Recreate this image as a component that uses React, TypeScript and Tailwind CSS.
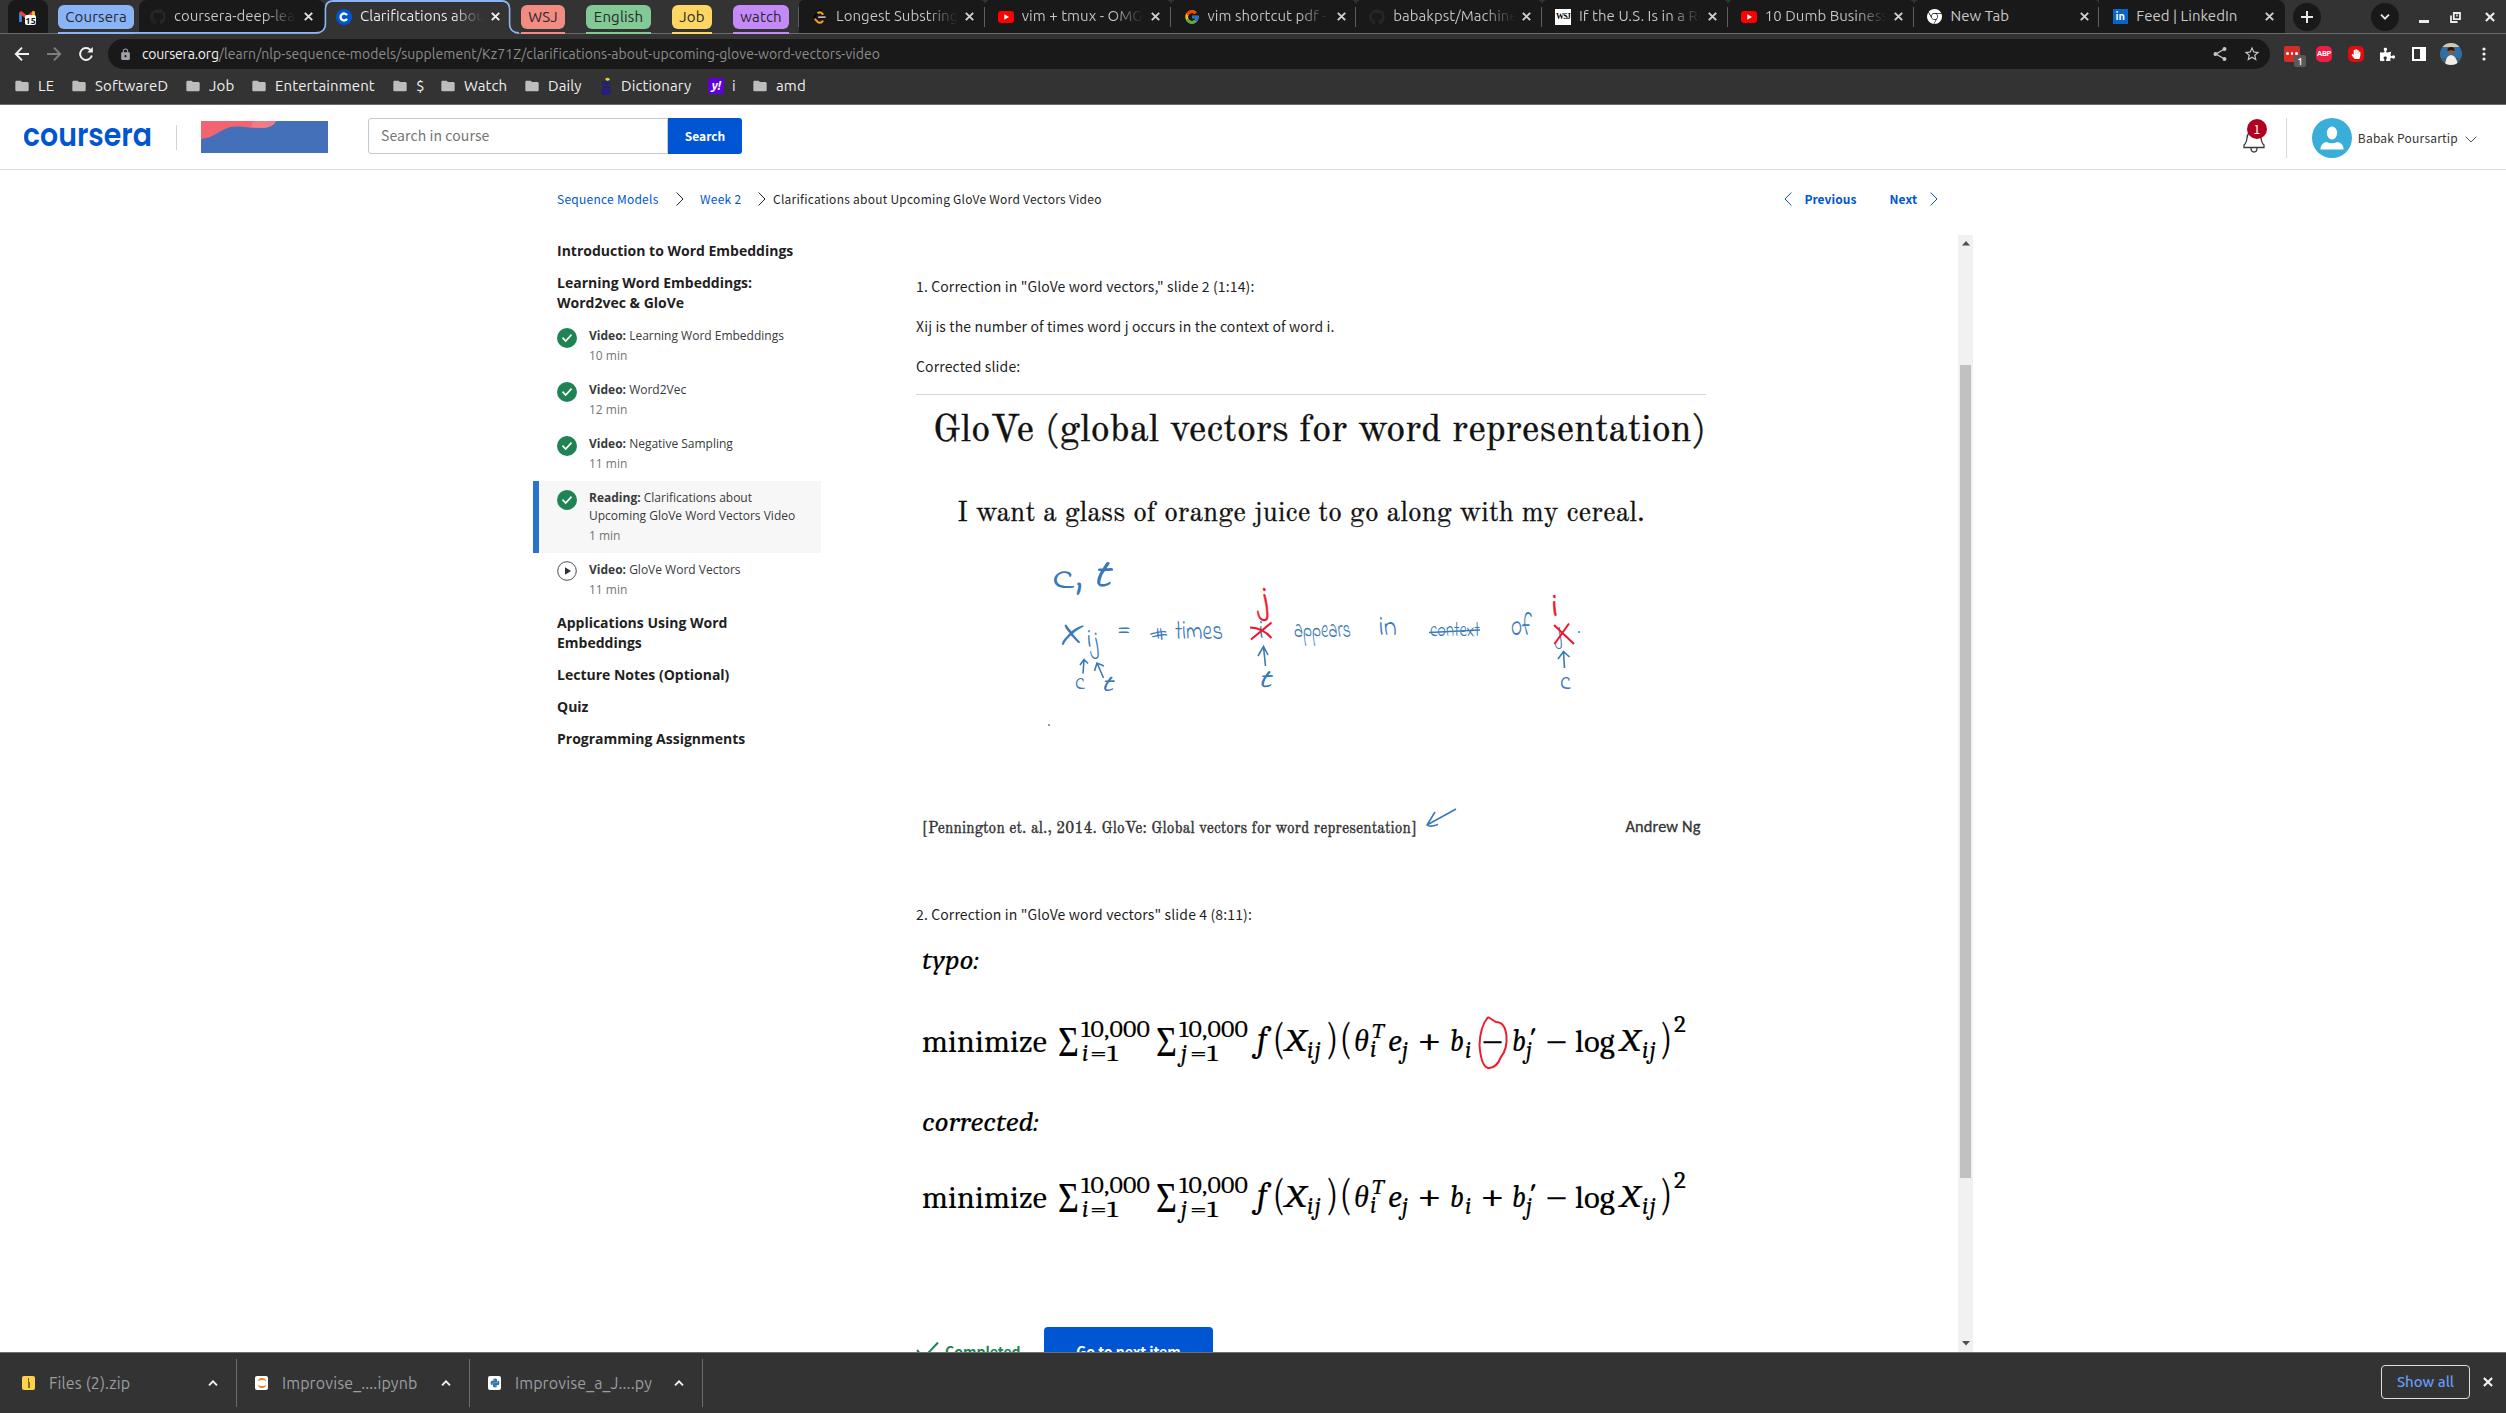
import type { ReactNode } from 'react';
import { FcGoogle } from 'react-icons/fc';
import { FaGithub, FaPuzzlePiece, FaPython, FaHandPaper } from 'react-icons/fa';
import { SiGooglechrome } from 'react-icons/si';
import { MdStarBorder, MdLock, MdFolder } from 'react-icons/md';

/* ---------- browser chrome ---------- */

function CloseX({ className = 'size-[9px]' }: { className?: string }) {
  return (
    <svg viewBox="0 0 9 9" className={className} fill="none" stroke="currentColor" strokeWidth="1.9">
      <path d="M0.8 0.8 8.2 8.2M8.2 0.8 0.8 8.2" />
    </svg>
  );
}

function YouTubeIcon() {
  return (
    <svg viewBox="0 0 16 16" className="size-4">
      <rect x="0" y="2" width="16" height="12" rx="3" fill="#f00" />
      <path d="M6.3 5.2 11 8l-4.7 2.8z" fill="#fff" />
    </svg>
  );
}

function LeetCodeIcon() {
  return (
    <svg viewBox="0 0 16 16" className="size-4" fill="none" strokeWidth="2" strokeLinecap="round">
      <path d="M8.500 1.200 3.200 6.600Q1.600 8.400 3.200 10.200" stroke="#050505" />
      <path d="M6.200 3.800 7.700 3.200Q9 3.200 10.600 5M3.200 10.400 5.800 13Q8 14.800 10.600 12.200" stroke="#ffa116" />
      <path d="M6.800 8.200H13" stroke="#b3b3b3" strokeWidth="1.700" />
    </svg>
  );
}

function CourseraMark() {
  return (
    <svg viewBox="0 0 16 16" className="size-4">
      <circle cx="8" cy="8" r="8" fill="#0056d2" />
      <path d="M11 6.1A3.5 3.5 0 1 0 11 9.9" fill="none" stroke="#fff" strokeWidth="2.3" />
    </svg>
  );
}

function GmailIcon() {
  return (
    <svg viewBox="0 0 18 16" className="h-4 w-[18px]">
      <path d="M1.5 13V3.5" stroke="#4285f4" strokeWidth="2.8" />
      <path d="M1 3l7 5.5L15 3" fill="none" stroke="#ea4335" strokeWidth="3.2" />
      <path d="M14.5 2.2V8" stroke="#fbbc04" strokeWidth="2.8" />
      <rect x="6" y="6" width="11" height="10" rx="2" fill="#fff" />
      <text x="11.6" y="14.6" textAnchor="middle" fontSize="9.5" fontWeight="700" fill="#111" fontFamily="Ubuntu, Noto Sans, sans-serif">15</text>
    </svg>
  );
}

function Tab({ icon, title, last, short }: { icon: ReactNode; title: string; last?: boolean; short?: boolean }) {
  return (
    <div className={`flex h-[33px] flex-1 items-center bg-[#191919] pl-[13px] ${last ? 'rounded-tr-lg' : 'rounded-t-[5px]'}`}>
      <span className="flex size-4 shrink-0 items-center justify-center">{icon}</span>
      <span
        className={`ml-2 w-[122px] shrink-0 overflow-hidden text-[15px] tracking-[0.03px] whitespace-nowrap ${
          short ? 'text-[#c9c9c9]' : 'bg-linear-to-r from-[#c9c9c9] from-75% to-[#191919] bg-clip-text text-transparent'
        }`}
      >
        {title}
      </span>
      <span className="ml-[7px] text-[#d0d0d0]"><CloseX /></span>
      {!last && <span className="ml-auto h-5 w-px bg-[#5e5e5e]" />}
    </div>
  );
}

function Chip({ label, chip, bar }: { label: string; chip: string; bar: string }) {
  return (
    <div className={`flex h-[34px] flex-col ${chip}`}>
      <span className={`mt-[5px] flex h-6 items-center justify-center rounded-md text-[15px] tracking-[0.15px] text-[#26282b] ${bar}`}>{label}</span>
      <span className={`mt-[3px] h-[1.5px] ${bar}`} />
    </div>
  );
}

function TabStrip() {
  return (
    <div className="relative flex h-[34px] shrink-0 border-b border-[#6b6b6b] bg-[#333]">
      <div className="ml-2 flex h-[33px] w-10 items-center justify-center rounded-t-lg bg-[#191919]"><GmailIcon /></div>
      <Chip label="Coursera" chip="ml-2.5 w-[76px]" bar="bg-[#8ab4f8]" />
      <div className="ml-[5px] flex h-[33px] w-[186px] items-center rounded-t-lg bg-[#191919] pl-[11px]">
        <FaGithub className="size-4 shrink-0 text-[#22272e]" />
        <span className="ml-2 w-[122px] overflow-hidden bg-linear-to-r from-[#c9c9c9] from-75% to-[#191919] bg-clip-text text-[15px] whitespace-nowrap text-transparent">coursera-deep-lea</span>
        <span className="ml-2 text-[#e0e0e0]"><CloseX /></span>
      </div>
      <div className="z-10 flex h-[33px] w-[185px] items-center pl-[11px]">
        <CourseraMark />
        <span className="ml-2 w-[124px] overflow-hidden bg-linear-to-r from-[#f2f2f2] from-75% to-[#333] bg-clip-text text-[15px] whitespace-nowrap text-transparent">Clarifications abou</span>
        <span className="ml-[7px] text-[#f2f2f2]"><CloseX /></span>
      </div>
      <Chip label="WSJ" chip="ml-[11px] w-11" bar="bg-[#f28b82]" />
      <Chip label="English" chip="ml-[21px] w-[65px]" bar="bg-[#81c995]" />
      <Chip label="Job" chip="ml-[21px] w-10" bar="bg-[#fdd663]" />
      <Chip label="watch" chip="ml-[21px] w-14" bar="bg-[#c58af9]" />
      <span className="mt-[7px] ml-[9px] h-5 w-px bg-[#5e5e5e]" />
      <div className="flex w-[1486px]">
        <Tab icon={<LeetCodeIcon />} title="Longest Substring" />
        <Tab icon={<YouTubeIcon />} title="vim + tmux - OMG!" />
        <Tab icon={<FcGoogle className="size-4" />} title="vim shortcut pdf - G" />
        <Tab icon={<FaGithub className="size-4 text-[#22272e]" />} title="babakpst/Machine" />
        <Tab icon={<span className="flex size-4 items-center justify-center bg-white font-['Liberation_Serif',serif] text-[8px] font-bold tracking-[-0.8px] text-black">WSJ</span>} title="If the U.S. Is in a Re" />
        <Tab icon={<YouTubeIcon />} title="10 Dumb Business" />
        <Tab short icon={<SiGooglechrome className="size-[15px] text-white" />} title="New Tab" />
        <Tab
          last
          short
          icon={<span className="flex size-[15px] items-center justify-center bg-[#0a66c2] text-[11px] font-bold text-white">in</span>}
          title="Feed | LinkedIn"
        />
      </div>
      <span className="mt-[3px] ml-2 flex size-7 items-center justify-center rounded-full bg-[#191919] text-[#e8e8e8]">
        <svg viewBox="0 0 12 12" className="size-3" stroke="currentColor" strokeWidth="2"><path d="M6 0v12M0 6h12" /></svg>
      </span>
      <span className="mt-[3px] ml-[50px] flex size-7 items-center justify-center rounded-full bg-[#191919] text-[#e8e8e8]">
        <svg viewBox="0 0 10 6" className="h-1.5 w-2.5" fill="none" stroke="currentColor" strokeWidth="1.8"><path d="M1 0.7 5 4.7 9 0.7" /></svg>
      </span>
      <span className="mt-5 ml-5 h-[3px] w-2.5 bg-[#ececec]" />
      <svg viewBox="0 0 11 11" className="mt-3 ml-[21px] size-[11px]" fill="none" stroke="#ececec" strokeWidth="1.8"><path d="M3.8 1h6.2v6.2H3.8zM1 3.5V10h6.5M6.2 3.5h1.5" /></svg>
      <span className="mt-3 ml-6 text-[#ececec]"><CloseX className="size-2.5" /></span>
      <svg className="absolute top-0 left-0 h-[34px] w-[530px]" viewBox="0 0 530 34">
        <path d="M58 32.8H316Q325.5 32.8 325.5 24V9Q325.5 1 333.5 1H501Q509.5 1 509.5 9V24Q509.5 32.8 519 32.8" fill="none" stroke="#8ab4f8" strokeWidth="1.8" />
        <path d="M319 34Q326.5 31 326.5 24V9Q326.5 2 333.5 2H501Q508.5 2 508.5 9V24Q508.5 31 516 34z" fill="#333" />
      </svg>
    </div>
  );
}

function Toolbar() {
  return (
    <div className="flex h-[38px] shrink-0 items-center bg-[#333] pt-0.5 pb-0">
      <svg viewBox="0 0 16 16" className="ml-3.5 size-4" fill="none" stroke="#f1f1f1" strokeWidth="1.9"><path d="M15 8H2M8 1.7 1.8 8 8 14.3" /></svg>
      <svg viewBox="0 0 16 16" className="ml-4 size-4" fill="none" stroke="#7f7f7f" strokeWidth="1.9"><path d="M1 8h13M8 1.7 14.2 8 8 14.3" /></svg>
      <svg viewBox="0 0 16 16" className="ml-4 size-4" fill="none" stroke="#f1f1f1" strokeWidth="1.9"><path d="M13.9 9.6A6 6 0 1 1 12.4 3.8L14 5.4" /><path d="M14.8 1v5.6H9.2z" fill="#f1f1f1" stroke="none" /></svg>
      <div className="ml-3.5 flex h-[30px] w-[2162px] items-center rounded-full bg-[#191919] pr-[9px]">
        <MdLock className="ml-[11px] size-[13px] text-[#a0a4a8]" />
        <span className="ml-[10px] text-[14px] tracking-[0.05px] text-[#8c8c8c]">
          <span className="tracking-[-0.2px] text-[#f3f3f3]">coursera.org</span>/learn/nlp-sequence-models/supplement/Kz71Z/clarifications-about-upcoming-glove-word-vectors-video
        </span>
        <svg viewBox="0 0 14 14" className="ml-auto size-3.5" fill="none" stroke="#c4c4c4" strokeWidth="1.4"><path d="M11.5 2 3 7l8.500 5" /><circle cx="11.500" cy="2" r="1.300" fill="#c4c4c4" /><circle cx="2.500" cy="7" r="1.300" fill="#c4c4c4" /><circle cx="11.500" cy="12" r="1.300" fill="#c4c4c4" /></svg>
        <MdStarBorder className="ml-4 size-[18px] text-[#c4c4c4]" />
      </div>
      <span className="relative ml-3.5 flex size-4 items-center justify-center rounded-[2px] bg-[#d32d27]">
        <span className="flex gap-0.5 pb-px">
          <i className="size-[2.500px] rounded-full bg-white" /><i className="size-[2.500px] rounded-full bg-white" /><i className="size-[2.500px] rounded-full bg-white" />
        </span>
        <span className="absolute top-[9px] left-[10px] flex h-3 w-3 items-center justify-center rounded-[2px] bg-[#5a5a5a] text-[10px] font-medium text-white">1</span>
      </span>
      <span className="ml-4 flex size-4 items-center justify-center rounded-[5px] bg-[#ed1e45] text-[7.500px] font-bold tracking-[-0.3px] text-white">ABP</span>
      <span className="ml-4 flex size-4 items-center justify-center rounded-[5px] bg-[#e40d0d] text-white"><FaHandPaper className="size-2.5" /></span>
      <FaPuzzlePiece className="ml-4 size-[15px] text-white" />
      <span className="ml-[17px] h-3.5 w-3.5 border-2 border-r-[6px] border-white" />
      <svg viewBox="0 0 22 22" className="ml-[14px] size-[22px]">
        <clipPath id="me"><circle cx="11" cy="11" r="11" /></clipPath>
        <g clipPath="url(#me)">
          <rect width="22" height="22" fill="#2f6fa6" />
          <rect width="22" height="4" fill="#d9c7a5" />
          <rect y="15" width="22" height="7" fill="#3f5d6b" />
          <path d="M5 22q1-10 6-10t7 10z" fill="#f1ede9" />
          <circle cx="11" cy="8.500" r="3.200" fill="#8b5a3e" />
          <path d="M7.500 8q-.5-4 3.500-4t3.500 4q-3.500-1.500-7 0z" fill="#231a16" />
        </g>
      </svg>
      <svg viewBox="0 0 4 14" className="ml-5 h-3.5 w-1" fill="#f1f1f1"><circle cx="2" cy="2" r="1.600" /><circle cx="2" cy="7" r="1.600" /><circle cx="2" cy="12" r="1.600" /></svg>
    </div>
  );
}

function Folder({ label, w }: { label: string; w: string }) {
  return (
    <span className={`flex shrink-0 items-center ${w}`}>
      <MdFolder className="-ml-px size-4 text-[#bdbdbd]" />
      <span className="ml-2 whitespace-nowrap">{label}</span>
    </span>
  );
}

function Bookmarks() {
  return (
    <div className="flex h-[33px] shrink-0 items-center border-b border-[#6b6b6b] bg-[#333] pb-1 pl-[15px] text-[15px] tracking-[0.12px] text-[#f0f0f0]">
      <Folder label="LE" w="w-[57px]" />
      <Folder label="SoftwareD" w="w-[114px]" />
      <Folder label="Job" w="w-[66px]" />
      <Folder label="Entertainment" w="w-[141px]" />
      <Folder label="$" w="w-[48px]" />
      <Folder label="Watch" w="w-[84px]" />
      <Folder label="Daily" w="w-[74px]" />
      <span className="flex w-[109px] items-center">
        <svg viewBox="0 0 14 18" className="h-[18px] w-3.5"><path d="M6 2q4-3 5 1l-3 1z" fill="#e8d21d" /><path d="M3 5l4-1 4 1v5l1 2-1 6H3L2 12l1-2z" fill="#231f7c" /><path d="M3 8h8M2 12h10" stroke="#333" strokeWidth="0.8" /></svg>
        <span className="ml-2">Dictionary</span>
      </span>
      <span className="flex w-[45px] items-center">
        <span className="flex size-4 items-center justify-center bg-[#5f01d1] text-[12px] font-bold tracking-[-0.5px] text-white italic">y!</span>
        <span className="ml-2">i</span>
      </span>
      <Folder label="amd" w="w-[80px]" />
    </div>
  );
}

function Download({ icon, name }: { icon: ReactNode; name: string }) {
  return (
    <div className="flex h-12 w-[233px] shrink-0 items-center border-r border-[#6d6d6d] pr-[18px] pl-[18px]">
      <span className="flex h-3.5 w-[13px] items-center justify-center">{icon}</span>
      <span className="ml-[14px] text-[16px] tracking-[0.12px] text-[#9a9da1]">{name}</span>
      <svg viewBox="0 0 10 6" className="ml-auto h-1.5 w-2.5" fill="none" stroke="#f0f0f0" strokeWidth="1.900"><path d="M1 5.300 5 1.300 9 5.300" /></svg>
    </div>
  );
}

function DownloadBar() {
  return (
    <div className="flex h-[61px] shrink-0 items-center border-t border-[#6f6f6f] bg-[#333] pl-1">
      <Download icon={<span className="flex h-3.5 w-[13px] flex-col items-center justify-between rounded-[2px] bg-[#fcd34a] py-0.5"><i className="h-1 w-px bg-[#7a5b00]" /><i className="h-1.5 w-0.5 bg-[#8a6a10]" /></span>} name="Files (2).zip" />
      <Download icon={<span className="flex h-3.5 w-[13px] flex-col items-center justify-between rounded-[2px] bg-white py-0.5"><i className="h-1 w-2 rounded-t-full border-t-2 border-[#f37726]" /><i className="h-1 w-2 rounded-b-full border-b-2 border-[#f37726]" /></span>} name="Improvise_....ipynb" />
      <Download icon={<span className="flex h-3.5 w-[13px] items-center justify-center rounded-[2px] bg-white"><FaPython className="size-2.5 text-[#3674a8]" /></span>} name="Improvise_a_J....py" />
      <span className="mb-0.5 ml-auto flex h-[34px] w-[89px] items-center justify-center rounded-[4px] border border-[#dedede] text-[15px] font-medium text-[#649cf5]">Show all</span>
      <span className="mr-[13px] mb-0.5 ml-[13px] text-[#f2f2f2]"><CloseX className="size-2.5" /></span>
    </div>
  );
}

/* ---------- course site ---------- */

function Header() {
  return (
    <header className="flex h-[65px] shrink-0 items-center border-b border-[#dcdcdc] bg-white">
      <svg viewBox="0 0 128 24" className="ml-6 h-6 w-32">
        <text x="-1" y="21" textLength="129" lengthAdjust="spacingAndGlyphs" className="fill-[#0056d2] font-['Poppins','Montserrat','Lato',sans-serif] text-[31px] font-semibold">coursera</text>
      </svg>
      <span className="ml-6 h-[25px] w-px bg-[#d2d2d2]" />
      <svg viewBox="0 0 127 32" className="ml-6 h-8 w-[127px]">
        <rect width="127" height="32" fill="#4370b8" />
        <path d="M0 0H75Q72 7 61 7C48 8 42 4 30 6C18 9 13 17 0 18z" fill="#f26470" />
        <path d="M52 0H75Q72 7 61 7L50 6z" fill="#ee7c88" />
      </svg>
      <div className="mb-[3px] ml-10 flex h-9">
        <span className="flex w-[300px] items-center rounded-l-[3px] border border-[#c7c7d1] pl-3 text-[14px] tracking-[0.1px] text-[#757575]">Search in course</span>
        <span className="flex w-[74px] items-center justify-center rounded-r-[3px] bg-[#0056d2] text-[12px] font-bold text-white">Search</span>
      </div>
      <span className="relative ml-auto flex h-10 w-[22px] items-end">
        <svg viewBox="0 0 22 28" className="mb-1 h-7 w-[22px]" fill="none" stroke="#3a3a3a" strokeWidth="1.300">
          <path d="M1 22.500v-2.500q2.500-2 3-7 .8-7 7-7t7 7q.5 5 3 7v2.500zM8 23q0 4 3 4t3-4" />
        </svg>
        <span className="absolute top-0.5 left-1 flex size-5 items-center justify-center rounded-full bg-[#b00020] text-[12px] text-white">1</span>
      </span>
      <span className="mt-0.5 ml-[21px] h-10 w-px bg-[#d8d8d8]" />
      <svg viewBox="0 0 40 40" className="mt-0.5 ml-[25px] size-10">
        <circle cx="20" cy="20" r="20" fill="#3badd9" />
        <ellipse cx="20" cy="15" rx="5.200" ry="6.500" fill="#fff" />
        <path d="M8.500 31.500q0-6.500 6-7.500 5.500 2.500 11 0 6 1 6 7.500z" fill="#fff" />
      </svg>
      <span className="mt-0.5 ml-[6px] text-[12px] tracking-[0.22px] text-[#333]">Babak Poursartip</span>
      <svg viewBox="0 0 12 7" className="mt-1 mr-[29px] ml-[7px] h-[7px] w-3" fill="none" stroke="#555"><path d="M0.700 0.700 6 6 11.300 0.700" /></svg>
    </header>
  );
}

function Angle({ left }: { left?: boolean }) {
  return (
    <svg viewBox="0 0 8 14" className="h-3.5 w-2" fill="none" stroke="currentColor" strokeWidth="1">
      <path d={left ? 'M7.400 0.500 1 7 7.400 13.500' : 'M0.600 0.500 7 7 0.600 13.500'} />
    </svg>
  );
}

function Breadcrumbs() {
  return (
    <nav className="flex h-[65px] shrink-0 items-center pb-[7px] pl-[557px] text-[12px] tracking-[0.25px] text-[#1f1f1f]">
      <span className="w-[119px] text-[#0056d2]">Sequence Models</span>
      <span className="w-[24px]"><Angle /></span>
      <span className="w-[58px] text-[#0056d2]">Week 2</span>
      <span className="w-[15px]"><Angle /></span>
      <span>Clarifications about Upcoming GloVe Word Vectors Video</span>
      <span className="mr-[568px] ml-auto flex items-center font-bold tracking-[0.06px] text-[#0056d2]">
        <Angle left />
        <span className="ml-3">Previous</span>
        <span className="mr-[13px] ml-[33px]">Next</span>
        <Angle />
      </span>
    </nav>
  );
}

function Item({ kind, title, time, active, pending }: { kind: string; title: string; time: string; active?: boolean; pending?: boolean }) {
  return (
    <div className={`flex w-[288px] items-start border-l-[6px] py-2 pl-[18px] text-[12px] leading-[18px] text-[#373a3c] ${active ? 'border-[#2a73cc] bg-[#f7f7f7]' : 'border-transparent'}`}>
      {pending ? (
        <svg viewBox="0 0 20 20" className="size-5 shrink-0"><circle cx="10" cy="10" r="9.300" fill="#fff" stroke="#4a4a55" /><path d="M8 6.300 14 10l-6 3.700z" fill="#2b2d3a" /></svg>
      ) : (
        <svg viewBox="0 0 20 20" className="mt-px size-5 shrink-0"><circle cx="10" cy="10" r="10" fill="#1f8354" /><path d="M5.500 9.600 8.700 13 14.500 6.600" fill="none" stroke="#fff" strokeWidth="1.600" /></svg>
      )}
      <div className="ml-3 w-[215px]">
        <p><b>{kind}:</b> {title}</p>
        <p className="h-5 leading-[22px] text-[#757575]">{time}</p>
      </div>
    </div>
  );
}

function Heading({ children }: { children: ReactNode }) {
  return <h3 className="ml-6 w-[245px] py-1.5 text-[14px] leading-5 font-bold text-[#1f1f1f]">{children}</h3>;
}

function Sidebar() {
  return (
    <aside className="ml-[533px] w-[383px] shrink-0 font-['Open_Sans','Noto_Sans',sans-serif]">
      <Heading>Introduction to Word Embeddings</Heading>
      <Heading>Learning Word Embeddings: Word2vec &amp; GloVe</Heading>
      <Item kind="Video" title="Learning Word Embeddings" time="10 min" />
      <Item kind="Video" title="Word2Vec" time="12 min" />
      <Item kind="Video" title="Negative Sampling" time="11 min" />
      <Item kind="Reading" title="Clarifications about Upcoming GloVe Word Vectors Video" time="1 min" active />
      <Item kind="Video" title="GloVe Word Vectors" time="11 min" pending />
      <Heading>Applications Using Word Embeddings</Heading>
      <Heading>Lecture Notes (Optional)</Heading>
      <Heading>Quiz</Heading>
      <Heading>Programming Assignments</Heading>
    </aside>
  );
}

/* A label placed on the slide; with a width given, it is stretched to span it. */
function Ink({ x, y, w, className, children }: { x: number; y: number; w?: number; className: string; children: string }) {
  return <text x={x} y={y} textLength={w} lengthAdjust={w ? 'spacingAndGlyphs' : undefined} className={className}>{children}</text>;
}

const SLIDE = "font-['Old_Standard_TT','Latin_Modern_Roman','Liberation_Serif',serif]";
const HAND = "fill-[#3a79b7] font-['Indie_Flower','Caveat','Lato',cursive]";
const LOOP = "font-['Caveat','Indie_Flower','Lato',cursive]";

function Slide() {
  return (
    <svg viewBox="916 394 790 448" className="block h-[448px] w-[790px]">
      <rect x="916" y="394" width="790" height="1" fill="#d6d6d6" />
      <g className={SLIDE}>
        <Ink x={933} y={440.500} w={773} className="fill-[#111] stroke-[#111] stroke-[0.400px] text-[37.500px]">GloVe (global vectors for word representation)</Ink>
        <Ink x={957} y={521} w={688} className="fill-[#111] stroke-[#111] stroke-[0.300px] text-[27.500px]">I want a glass of orange juice to go along with my cereal.</Ink>
        <Ink x={922} y={833} w={495} className="fill-[#333] stroke-[#333] stroke-[0.400px] text-[16px]">[Pennington et. al., 2014. GloVe: Global vectors for word representation]</Ink>
      </g>
      <Ink x={1625.500} y={832} w={75} className="fill-[#333] stroke-[#333] stroke-[0.300px] font-['Carlito','Lato',sans-serif] text-[16.500px]">Andrew Ng</Ink>
      <g className={HAND}>
        <Ink x={1052} y={588} w={31} className="text-[36px]">c,</Ink>
        <g className={LOOP}><Ink x={1091} y={587} w={18} className="text-[44px]">t</Ink></g>
        <Ink x={1060} y={643} w={25} className="text-[35px]">X</Ink>
        <Ink x={1087} y={647} className="text-[26px]">i</Ink>
        <Ink x={1093} y={648} className="text-[26px]">j</Ink>
        <Ink x={1117} y={638} w={14} className="text-[26px]">=</Ink>
        <Ink x={1150} y={640} w={18} className="text-[24px]">#</Ink>
        <Ink x={1175} y={639} w={48} className="text-[29px]">times</Ink>
        <Ink x={1259} y={638} className="text-[26px]">i</Ink>
        <Ink x={1294} y={637} w={57} className="text-[26px]">appears</Ink>
        <Ink x={1379} y={635} w={18} className="text-[28px]">in</Ink>
        <Ink x={1430} y={636} w={50} className="text-[22px]">context</Ink>
        <Ink x={1511} y={635} w={21} className="text-[32px]">of</Ink>
        <Ink x={1557} y={640} className="text-[22px]">j</Ink>
        <Ink x={1075} y={689} w={10} className="text-[24px]">c</Ink>
        <g className={LOOP}>
          <Ink x={1100} y={691} w={12} className="text-[26px]">t</Ink>
          <Ink x={1257} y={687} w={13} className="text-[30px]">t</Ink>
        </g>
        <Ink x={1560} y={689} w={11} className="text-[26px]">c</Ink>
      </g>
      <g className="fill-none stroke-[#3a79b7] stroke-[1.600px]">
        <path d="M1083 673.500 1084 660M1080 665 1084 659.500 1088 663.500" />
        <path d="M1103.500 678 1097.500 664M1094.500 671 1097 663 1104 666" />
        <path d="M1265.500 666 1263.500 647M1258 656 1263.500 646.500 1268 655" />
        <path d="M1564.500 668 1563.500 652M1558 659 1563.500 651.500 1569.500 657" />
        <path d="M1456 809 1427 825M1435 812 1427 825Q1430 827.500 1438 824.500" />
        <path d="M1429 632.500 1480 630" />
      </g>
      <circle cx="1049" cy="725" r="0.900" className="fill-[#3a79b7]" />
      <circle cx="1579" cy="632" r="1" className="fill-[#3a79b7]" />
      <g className="fill-none stroke-[#f0142a] stroke-2">
        <path d="M1250 627.500Q1263 628 1271.500 638M1251 639.500 1271.500 622.500" />
        <path d="M1554 625 1574 644M1569 623.500 1554.500 644" />
      </g>
      <g className="fill-[#f0142a] font-['Indie_Flower','Caveat','Lato',cursive]">
        <Ink x={1261} y={607} className="stroke-[#f0142a] stroke-[0.500px] text-[33px]">j</Ink>
        <Ink x={1552} y={616} className="stroke-[#f0142a] stroke-[0.500px] text-[33px]">i</Ink>
      </g>
    </svg>
  );
}

function Formula({ dy, sign }: { dy: number; sign: string }) {
  return (
    <g transform={`translate(0 ${dy})`}>
      <Ink x={922} y={1051.500} w={125} className="text-[32px]">minimize</Ink>
      <Ink x={1058} y={1056} w={21} className="text-[42px]">Σ</Ink>
      <Ink x={1081} y={1037} w={69} className="text-[23px]">10,000</Ink>
      <Ink x={1082} y={1061} className="text-[24px] italic">i</Ink>
      <Ink x={1090} y={1061} w={28} className="text-[22px]">=1</Ink>
      <Ink x={1156} y={1056} w={21} className="text-[42px]">Σ</Ink>
      <Ink x={1179} y={1037} w={69} className="text-[23px]">10,000</Ink>
      <Ink x={1181} y={1061} className="text-[24px] italic">j</Ink>
      <Ink x={1190} y={1061} w={28} className="text-[22px]">=1</Ink>
      <Ink x={1257} y={1051} className="text-[35px] italic">f</Ink>
      <Ink x={1273} y={1053} w={12} className="text-[43px]">(</Ink>
      <Ink x={1285} y={1051} w={22} className="text-[31px] italic">X</Ink>
      <Ink x={1307} y={1058} className="text-[24px] tracking-[1.500px] italic">ij</Ink>
      <Ink x={1326} y={1053} w={12} className="text-[43px]">)</Ink>
      <Ink x={1340} y={1053} w={12} className="text-[43px]">(</Ink>
      <Ink x={1354} y={1051} w={15} className="text-[31px] italic">θ</Ink>
      <Ink x={1372} y={1037.500} w={12} className="text-[20px] italic">T</Ink>
      <Ink x={1370} y={1057} className="text-[24px] italic">i</Ink>
      <Ink x={1388} y={1051} w={14} className="text-[32px] italic">e</Ink>
      <Ink x={1402} y={1058} className="text-[24px] italic">j</Ink>
      <Ink x={1417} y={1052.500} w={25} className="text-[37px]">+</Ink>
      <Ink x={1450} y={1051} w={14} className="text-[31px] italic">b</Ink>
      <Ink x={1465} y={1058} className="text-[24px] italic">i</Ink>
      <Ink x={1480} y={1052.500} w={25} className="text-[37px]">{sign}</Ink>
      <Ink x={1512} y={1051} w={14} className="text-[31px] italic">b</Ink>
      <Ink x={1529} y={1051} w={8} className="text-[34px]">′</Ink>
      <Ink x={1526} y={1058} className="text-[24px] italic">j</Ink>
      <Ink x={1544} y={1052.500} w={25} className="text-[37px]">−</Ink>
      <Ink x={1575} y={1051.500} w={40} className="text-[32px]">log</Ink>
      <Ink x={1620} y={1051} w={21} className="text-[31px] italic">X</Ink>
      <Ink x={1642} y={1058} className="text-[24px] tracking-[1.500px] italic">ij</Ink>
      <Ink x={1660} y={1053} w={12} className="text-[43px]">)</Ink>
      <Ink x={1674} y={1031.500} w={12} className="text-[23px]">2</Ink>
    </g>
  );
}

function Formulas() {
  return (
    <svg viewBox="916 935 790 300" className="block h-[300px] w-[790px] fill-black stroke-black stroke-[0.150px] font-['Cambria','Caladea','Liberation_Serif',serif]">
      <Ink x={922} y={969} w={57} className="text-[28px] italic">typo:</Ink>
      <Formula dy={0} sign="−" />
      <Ink x={922} y={1130.500} w={117} className="text-[28px] italic">corrected:</Ink>
      <Formula dy={156.300} sign="+" />
      <path d="M1488 1017Q1480 1027 1479.500 1045Q1481 1066 1488 1068Q1496 1069 1501 1057Q1507.500 1049 1506.500 1036Q1505 1022 1496 1022L1488 1017" className="fill-none stroke-[#ee1c2e] stroke-2" />
    </svg>
  );
}

function Content() {
  return (
    <main className="flex h-[1118px] w-[1042px] shrink-0 flex-col overflow-hidden text-[14px] leading-5 tracking-[0.13px] text-[#1f1f1f]">
      <p className="mt-[41px]">1. Correction in "GloVe word vectors," slide 2 (1:14):</p>
      <p className="mt-5">Xij is the number of times word j occurs in the context of word i.</p>
      <p className="mt-5">Corrected slide:</p>
      <div className="mt-[18px]"><Slide /></div>
      <p className="mt-[62px]">2. Correction in "GloVe word vectors" slide 4 (8:11):</p>
      <div className="mt-[11px]"><Formulas /></div>
      <div className="mt-[92px] flex shrink-0 items-center font-bold tracking-normal">
        <svg viewBox="0 0 23 18" className="h-[18px] w-[23px]" fill="none" stroke="#1f8354" strokeWidth="2"><path d="M1 8 7.500 16 22 0.500" /></svg>
        <span className="ml-1.5 w-[99px] text-[#1f8354]">Completed</span>
        <span className="flex h-12 w-[169px] items-center justify-center rounded-[4px] bg-[#0056d2] text-white">Go to next item</span>
      </div>
    </main>
  );
}

function Scrollbar() {
  return (
    <div className="flex h-full w-[15px] flex-col items-center bg-[#f1f1f1]">
      <svg viewBox="0 0 8 5" className="mt-1.5 h-[5px] w-2" fill="#505050"><path d="M4 0 8 4.500H0z" /></svg>
      <span className="mt-[119px] h-[813px] w-[11px] bg-[#c1c1c1]" />
      <svg viewBox="0 0 8 5" className="mt-auto mb-1.5 h-[5px] w-2" fill="#505050"><path d="M4 4.500 8 0H0z" /></svg>
    </div>
  );
}

export default function App() {
  return (
    <div className="flex h-[1413px] w-[2506px] flex-col overflow-hidden bg-white font-['Ubuntu','Noto_Sans',sans-serif]">
      <TabStrip />
      <Toolbar />
      <Bookmarks />
      <div className="flex min-h-0 flex-1 flex-col font-['Noto_Sans_CJK_SC','Noto_Sans',sans-serif]">
        <Header />
        <Breadcrumbs />
        <div className="flex min-h-0 flex-1 overflow-hidden">
          <Sidebar />
          <Content />
          <Scrollbar />
        </div>
      </div>
      <DownloadBar />
    </div>
  );
}
